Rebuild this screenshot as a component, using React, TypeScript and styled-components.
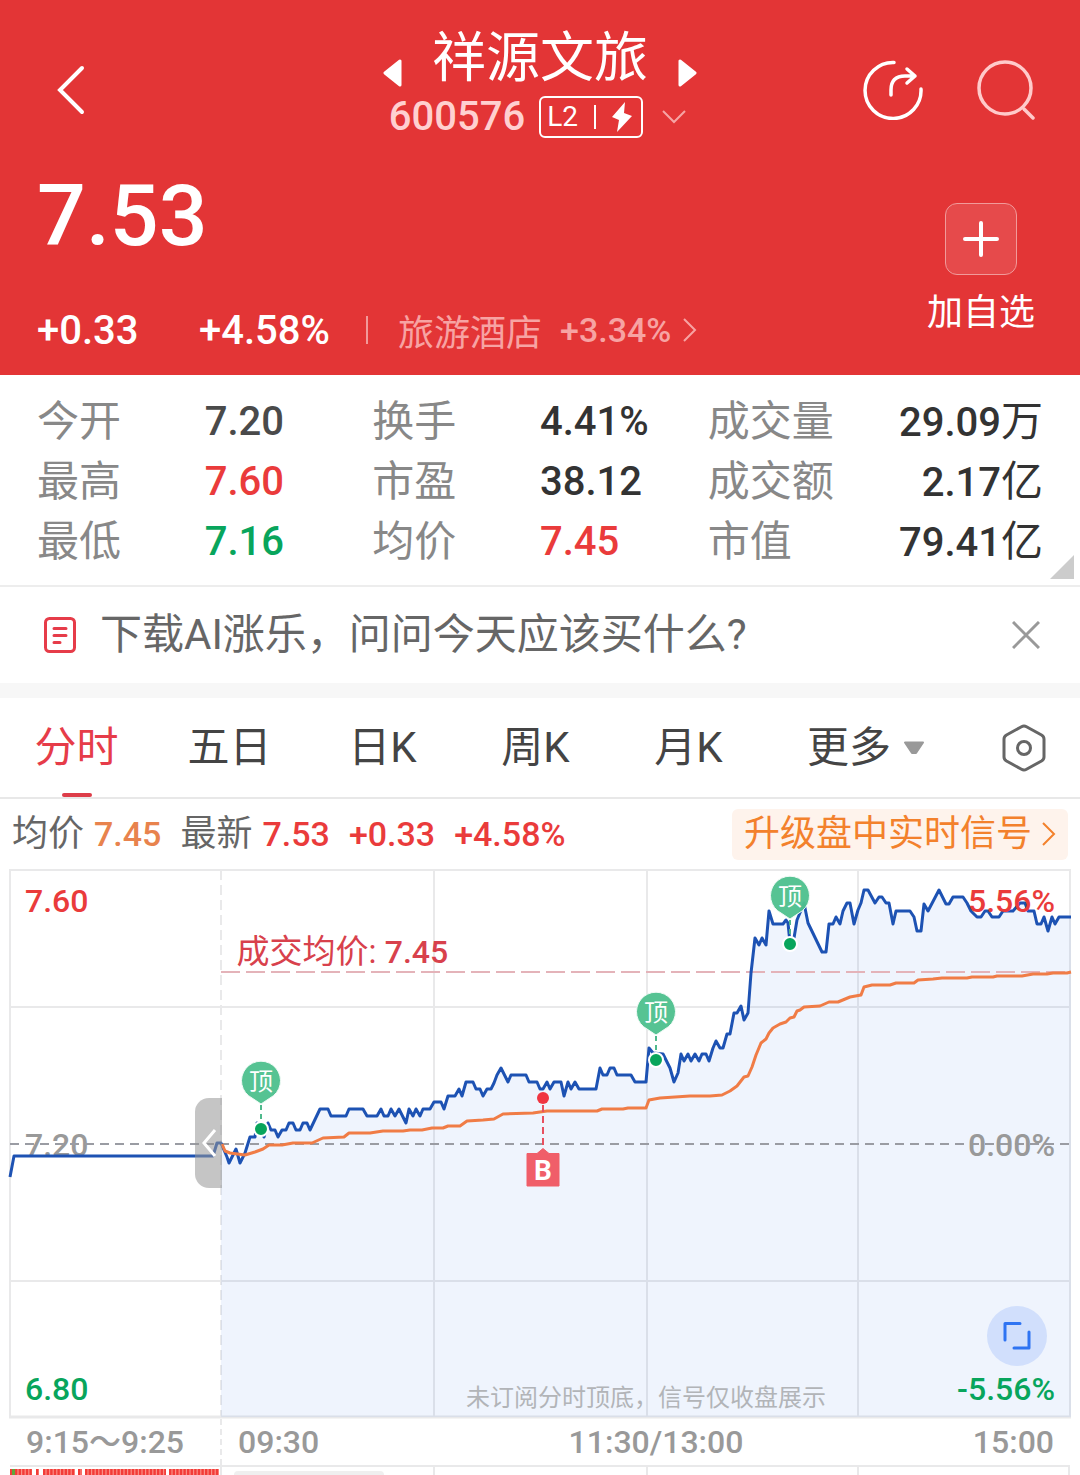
import React, { useState } from "react";
import styled, { createGlobalStyle } from "styled-components";

const RED = "#e33536";
const UP = "#ea3b3b";
const DOWN = "#08a55c";
const GRID = "#e9e9ea";

const GlobalStyle = createGlobalStyle`
  *, *::before, *::after { box-sizing: border-box; }
  body {
    margin: 0;
    background: #fff;
    color: #333;
    font-family: Roboto, "Noto Sans CJK SC", sans-serif;
  }
  button {
    margin: 0;
    padding: 0;
    border: 0;
    background: none;
    color: inherit;
    font: inherit;
    cursor: pointer;
  }
  svg { display: block; }
`;

const Page = styled.main`
  overflow: hidden;
`;

/* ---------- header ---------- */

const Header = styled.header`
  background: ${RED};
  color: #fff;
  padding: 24px 45px 15px 37px;
`;

const TopBar = styled.div`
  display: grid;
  grid-template-columns: 1fr auto 1fr;
  align-items: center;
  padding-left: 8px;
`;

const Side = styled.div<{ $end?: boolean }>`
  display: flex;
  gap: 52px;
  padding-top: 18px;
  padding-left: ${(p) => (p.$end ? "0" : "12px")};
  justify-content: ${(p) => (p.$end ? "flex-end" : "flex-start")};
`;

const TitleBlock = styled.div`
  display: flex;
  flex-direction: column;
  align-items: center;
  gap: 8px;
`;

const TitleRow = styled.div`
  display: flex;
  align-items: flex-end;
  gap: 30px;
  min-height: 64px;
`;

const Title = styled.h1`
  margin: 0;
  font-size: 54px;
  line-height: 58px;
  font-weight: 400;
`;

const CodeRow = styled.div`
  display: flex;
  align-items: center;
  gap: 14px;
  height: 42px;
`;

const Code = styled.span`
  font-size: 40px;
  line-height: 42px;
  font-weight: 500;
  color: #ffd0d0;
`;

const LevelBadge = styled.span`
  display: flex;
  align-items: center;
  justify-content: space-between;
  width: 104px;
  height: 42px;
  padding: 0 8px 0 6px;
  border: 2px solid #fff;
  border-radius: 6px;
  font-size: 28px;
  line-height: 38px;
`;

const Bar = styled.i<{ $height: number; $color: string }>`
  width: 2px;
  height: ${(p) => p.$height}px;
  background: ${(p) => p.$color};
`;

const Separator = styled(Bar)`
  margin-left: 36px;
`;

const Quote = styled.section`
  display: flex;
  justify-content: space-between;
  align-items: flex-start;
  padding-top: 34px;
`;

const Price = styled.div`
  font-size: 86px;
  line-height: 88px;
  font-weight: 500;
`;

const ChangeRow = styled.div`
  display: flex;
  align-items: center;
  height: 60px;
  margin-top: 40px;
  font-size: 40px;
  font-weight: 500;
`;

const Change = styled.span`
  width: 162px;
`;

const Sector = styled.a`
  display: flex;
  align-items: center;
  margin-left: 30px;
  color: #f7a3a3;
  font-size: 36px;
  font-weight: 400;
  text-decoration: none;
`;

const SectorChange = styled.span`
  margin: 0 12px 0 18px;
  font-size: 34px;
  font-weight: 500;
`;

const AddButton = styled.button`
  display: flex;
  flex-direction: column;
  align-items: center;
  gap: 12px;
  padding-top: 31px;
  font-size: 36px;
  line-height: 52px;
`;

const AddBox = styled.span`
  display: flex;
  align-items: center;
  justify-content: center;
  width: 72px;
  height: 72px;
  border: 1px solid #f19a9a;
  border-radius: 12px;
  background: #e64a4b;
`;

/* ---------- key figures ---------- */

const Stats = styled.dl`
  position: relative;
  display: grid;
  grid-template-columns: repeat(3, 1fr);
  grid-auto-rows: 60px;
  margin: 0;
  padding: 17px 37px 13px;
  border-bottom: 2px solid #ededed;
  font-size: 42px;
  line-height: 60px;
`;

const Stat = styled.div<{ $spread?: boolean }>`
  display: grid;
  grid-template-columns: ${(p) => (p.$spread ? "auto 1fr" : "1fr 1fr")};
  text-align: ${(p) => (p.$spread ? "right" : "left")};
`;

const StatName = styled.dt`
  color: #888;
`;

const StatValue = styled.dd<{ $color?: string }>`
  margin: 0;
  font-size: 40px;
  font-weight: 500;
  color: ${(p) => p.$color ?? "#333"};
`;

const Unit = styled.span`
  font-size: 42px;
  font-weight: 400;
`;

const Corner = styled.i`
  position: absolute;
  right: 6px;
  bottom: 6px;
  border: 12px solid;
  border-color: transparent #ccc #ccc transparent;
`;

/* ---------- promotion strip ---------- */

const Promo = styled.section`
  display: flex;
  align-items: center;
  height: 96px;
  padding: 0 40px 0 44px;
`;

const PromoText = styled.a`
  flex: 1;
  margin-left: 24px;
  color: #666;
  font-size: 42px;
  line-height: 60px;
  text-decoration: none;
`;

const Divider = styled.div`
  height: 15px;
  background: #f7f7f7;
`;

/* ---------- period tabs ---------- */

const Tabs = styled.nav`
  display: grid;
  grid-template-columns: repeat(5, 153fr) 202fr 113fr;
  height: 101px;
  border-bottom: 2px solid #e8e8e8;
`;

const Tab = styled.button<{ $active?: boolean }>`
  position: relative;
  display: flex;
  align-items: center;
  justify-content: center;
  gap: 12px;
  font-size: 42px;
  line-height: 60px;
  color: ${(p) => (p.$active ? "#e63c49" : "#444")};

  &::after {
    content: "";
    display: ${(p) => (p.$active ? "block" : "none")};
    position: absolute;
    bottom: 0;
    width: 30px;
    height: 4px;
    border-radius: 2px;
    background: #dd3d49;
  }
`;

/* ---------- chart ---------- */

const Legend = styled.div`
  display: flex;
  align-items: center;
  height: 70px;
  padding: 0 12px;
  font-size: 34px;
  line-height: 50px;
  font-weight: 500;
  color: ${UP};
`;

const LegendName = styled.span`
  margin-right: 10px;
  font-size: 36px;
  font-weight: 400;
  color: #666;
`;

const LegendValue = styled.span<{ $color?: string }>`
  margin-right: 19px;
  color: ${(p) => p.$color ?? "inherit"};
`;

const Upgrade = styled.button`
  display: flex;
  align-items: center;
  gap: 10px;
  height: 51px;
  margin-left: auto;
  padding: 0 12px;
  border-radius: 6px;
  background: #fef3ec;
  color: #f3812c;
  font-size: 36px;
  line-height: 50px;
  font-weight: 400;
`;

const Chart = styled.section`
  position: relative;
  margin: 0 10px;
`;

const Plot = styled.svg`
  position: relative;
  width: 100%;
  height: auto;
  overflow: visible;
`;

const Scale = styled.div<{ $right?: boolean }>`
  position: absolute;
  top: 12px;
  bottom: 10px;
  ${(p) => (p.$right ? "right: 15px;" : "left: 15px;")}
  display: flex;
  flex-direction: column;
  justify-content: space-between;
  text-align: ${(p) => (p.$right ? "right" : "left")};
  font-size: 32px;
  line-height: 40px;
  font-weight: 500;
`;

const Tone = styled.span<{ $color: string }>`
  color: ${(p) => p.$color};
`;

const AverageNote = styled.div`
  position: absolute;
  top: 12%;
  left: 21%;
  margin-left: 4px;
  font-size: 33px;
  line-height: 34px;
  color: #d8414c;
`;

const Strong = styled.span`
  font-size: 32px;
  font-weight: 500;
`;

const Note = styled.div`
  position: absolute;
  right: 244px;
  bottom: 4px;
  font-size: 24px;
  line-height: 34px;
  color: #b2b4b8;
`;

const Handle = styled.button`
  position: absolute;
  top: 50%;
  right: 80%;
  display: flex;
  align-items: center;
  justify-content: center;
  width: 27px;
  height: 90px;
  margin-top: -46px;
  border-radius: 14px 0 0 14px;
  background: rgba(150, 150, 150, 0.55);
`;

const Expand = styled.button`
  position: absolute;
  right: 23px;
  bottom: 53px;
  display: flex;
  align-items: center;
  justify-content: center;
  width: 60px;
  height: 60px;
  border-radius: 50%;
  background: #d1dffc;
`;

const TimeAxis = styled.div`
  display: grid;
  grid-template-columns: 212fr 212fr 444fr 192fr;
  margin: 0 10px;
  height: 46px;
  font-size: 32px;
  line-height: 46px;
  font-weight: 500;
  color: #999;
`;

const Tick = styled.span<{ $align?: string; $dashed?: boolean }>`
  padding: 0 16px;
  text-align: ${(p) => p.$align ?? "left"};
  border-right: ${(p) => (p.$dashed ? `2px dashed ${GRID}` : "0")};
`;

const Volume = styled.section`
  display: grid;
  grid-template-columns: 210fr 213fr 213fr 211fr 211fr;
  margin: 0 10px;
  border: solid ${GRID};
  border-width: 2px 2px 0 0;
`;

const VolumeCell = styled.div`
  height: 8px;
  padding: 4px 0 0 12px;
  border-left: 2px solid ${GRID};

  &:first-child {
    padding: 2px 0 0;
    border: 0;
  }
`;

const VolumeTag = styled.div`
  width: 150px;
  height: 4px;
  border-radius: 4px 4px 0 0;
  background: #efefef;
`;

const PRICE_LINE =
  "10,1177 14,1156 213,1156 217,1143 221,1143 227,1157 229,1163 236,1149 240,1163 245,1153 250,1137 255,1137 257,1123 261,1129 264,1137 268,1123 271,1130 275,1130 278,1137 282,1130 286,1130 289,1123 293,1123 296,1130 300,1130 303,1123 307,1123 310,1130 320,1109 328,1109 331,1116 346,1116 349,1109 363,1109 367,1116 377,1116 381,1109 384,1116 388,1116 391,1109 395,1116 399,1109 406,1123 409,1109 413,1116 416,1109 420,1116 423,1109 430,1109 434,1102 441,1102 444,1109 448,1096 455,1096 459,1089 462,1096 466,1082 473,1082 476,1089 480,1089 483,1096 487,1089 491,1089 494,1083 497,1075 501,1068 508,1082 511,1075 526,1075 529,1082 537,1082 540,1089 543,1089 547,1082 550,1089 554,1082 561,1082 564,1096 568,1082 571,1089 575,1082 579,1089 596,1089 600,1068 603,1075 607,1075 610,1068 614,1068 617,1075 631,1075 635,1082 646,1082 649,1048 653,1053 663,1054 670,1068 674,1082 678,1073 681,1054 684,1061 688,1054 691,1061 695,1054 699,1061 702,1054 706,1054 709,1061 713,1048 716,1041 720,1048 723,1048 727,1034 730,1034 734,1013 737,1013 741,1006 744,1020 748,1013 751,973 755,938 759,945 762,938 766,945 769,911 773,924 783,924 786,920 788,923 790,943 794,938 797,920 804,903 808,923 822,952 826,952 829,924 833,924 836,917 840,924 843,911 847,903 850,903 854,924 858,910 861,903 864,890 868,890 875,903 879,897 882,897 886,903 889,903 893,924 896,911 910,911 914,917 917,931 921,931 924,904 928,911 939,890 946,904 949,904 953,897 963,897 967,903 971,911 977,917 981,917 985,911 988,911 992,917 999,917 1003,911 1013,911 1020,903 1025,903 1028,911 1034,911 1037,924 1041,924 1044,917 1048,931 1052,917 1055,924 1059,917 1071,917";

const AVERAGE_LINE =
  "222,1144 225,1151 230,1153 245,1155 255,1152 263,1149 269,1145 282,1145 293,1143 312,1143 323,1138 344,1137 349,1133 370,1133 383,1131 403,1131 410,1130 422,1130 432,1128 443,1128 448,1126 460,1126 467,1121 483,1120 494,1119 503,1114 533,1113 547,1111 597,1111 602,1109 623,1109 628,1108 646,1108 649,1100 660,1098 690,1096 710,1096 722,1095 730,1091 737,1086 744,1077 748,1076 752,1067 756,1055 761,1043 766,1039 769,1033 773,1028 780,1024 786,1022 790,1018 794,1017 797,1011 800,1010 804,1007 820,1006 829,1002 838,1002 850,997 861,995 864,987 872,985 890,985 896,983 914,983 918,980 933,979 942,978 967,978 972,977 993,977 997,976 1022,976 1033,974 1047,974 1053,973 1067,973 1071,972";

const OPEN_AT = PRICE_LINE.indexOf("221,1143");
const AREA = `${PRICE_LINE.slice(OPEN_AT)} 1071,1417 221,1417`;

function TopMarker({ x, y, dot }: { x: number; y: number; dot: number }) {
  return (
    <g>
      <path d={`M${x} ${y + 24}V${dot}`} stroke="#4fb98c" strokeWidth="2" strokeDasharray="5 4" />
      <path
        d={`M${x} ${y + 23}L${x - 9} ${y + 17}A19.5 19.5 0 1 1 ${x + 9} ${y + 17}Z`}
        fill="#4fc18f"
        fillOpacity="0.96"
        stroke="#f2fbf7"
        strokeWidth="1"
      />
      <text x={x} y={y + 9} textAnchor="middle" fontSize="24" fill="#fff">
        顶
      </text>
      <circle cx={x} cy={dot} r="7" fill={DOWN} stroke="#fff" strokeWidth="2" />
    </g>
  );
}

function PriceChart() {
  return (
    <Chart aria-label="分时走势">
      <Scale>
        <Tone $color={UP}>7.60</Tone>
        <Tone $color="#999">7.20</Tone>
        <Tone $color={DOWN}>6.80</Tone>
      </Scale>
      <Plot viewBox="10 869 1060 550" fill="none">
        <g stroke={GRID} strokeWidth="2">
          <path d="M9 870H1071M10 1007H1070M10 1281H1070M10 870V1418M434 870V1417M647 870V1417M858 870V1417M1070 870V1418" />
          <path d="M9 1417H1071" strokeWidth="3" />
          <path d="M221 870V1417" strokeDasharray="10 5" />
        </g>
        <polygon points={AREA} fill="#1f66e5" fillOpacity="0.07" />
        <path d="M10 1144H1070" stroke="#9a9ca3" strokeWidth="2" strokeDasharray="9 6" />
        <path d="M221 972H1070" stroke="#e4b3b9" strokeWidth="2" strokeDasharray="19 6" />
        <polyline points={PRICE_LINE} stroke="#1d52b3" strokeWidth="3" strokeLinejoin="round" />
        <polyline points={AVERAGE_LINE} stroke="#f07c46" strokeWidth="3" strokeLinejoin="round" />
        <TopMarker x={261} y={1081} dot={1129} />
        <TopMarker x={656} y={1012} dot={1060} />
        <TopMarker x={790} y={896} dot={944} />
        <path d="M543 1105V1148" stroke="#e8505f" strokeWidth="2" strokeDasharray="7 4" />
        <circle cx="543" cy="1098" r="6" fill="#f03541" />
        <path
          d="M527 1153.500H537L543 1148.500L549 1153.500H559V1186H527Z"
          fill="#f05e69"
          stroke="#f05e69"
          strokeWidth="1"
          strokeLinejoin="round"
        />
        <text x="543" y="1180" textAnchor="middle" fontSize="28" fontWeight="700" fill="#fff">
          B
        </text>
      </Plot>
      <Scale $right>
        <Tone $color={UP}>5.56%</Tone>
        <Tone $color="#999">0.00%</Tone>
        <Tone $color={DOWN}>-5.56%</Tone>
      </Scale>
      <AverageNote>
        成交均价: <Strong>7.45</Strong>
      </AverageNote>
      <Note>未订阅分时顶底，信号仅收盘展示</Note>
      <Handle aria-label="收起集合竞价">
        <svg width="16" height="30" viewBox="0 0 16 30" fill="none">
          <path d="M14 2L3 15L14 28" stroke="#fff" strokeWidth="3" />
        </svg>
      </Handle>
      <Expand aria-label="全屏">
        <svg width="28" height="28" viewBox="0 0 28 28" fill="none" stroke="#2f74f2" strokeWidth="3">
          <path d="M2 18V1.500H17M26 10V26H11" strokeLinecap="round" strokeLinejoin="round" />
        </svg>
      </Expand>
    </Chart>
  );
}

const AUCTION_GROUPS = [
  [5, 22],
  [26, 29],
  [33, 65],
  [68, 72],
  [75, 156],
  [159, 209],
];

function AuctionVolume() {
  return (
    <svg width="100%" height="6" viewBox="0 0 210 6" preserveAspectRatio="none">
      <path d="M0 0H2V6H0Z" fill="#f23c38" />
      <path d="M2 0H5V6H2Z" fill="#5fa63c" />
      {AUCTION_GROUPS.map(([from, to]) => (
        <g key={from}>
          <path d={`M${from} 0H${to}V6H${from}Z`} fill="#fb8f88" />
          <path d={`M${from} 3H${to}`} stroke="#f23c38" strokeWidth="6" strokeDasharray="2.400 1.200" />
        </g>
      ))}
    </svg>
  );
}

const STATS = [
  { name: "今开", value: "7.20", color: "#4a4a4a" },
  { name: "换手", value: "4.41%" },
  { name: "成交量", value: "29.09", unit: "万" },
  { name: "最高", value: "7.60", color: UP },
  { name: "市盈", value: "38.12" },
  { name: "成交额", value: "2.17", unit: "亿" },
  { name: "最低", value: "7.16", color: DOWN },
  { name: "均价", value: "7.45", color: UP },
  { name: "市值", value: "79.41", unit: "亿" },
];

const PERIODS = ["分时", "五日", "日K", "周K", "月K"];

export default function App() {
  const [period, setPeriod] = useState("分时");

  return (
    <Page>
      <GlobalStyle />
      <Header>
        <TopBar>
          <Side>
            <button aria-label="返回">
              <svg width="28" height="50" viewBox="0 0 28 50" fill="none">
                <path d="M25 3L3 25L25 47" stroke="#fff" strokeWidth="4" strokeLinecap="round" />
              </svg>
            </button>
          </Side>
          <TitleBlock>
            <TitleRow>
              <button aria-label="上一只">
                <svg width="19" height="29" viewBox="0 0 19 29">
                  <path d="M2 14L17 2V26Z" fill="#fff" stroke="#fff" strokeWidth="3" strokeLinejoin="round" />
                </svg>
              </button>
              <Title>祥源文旅</Title>
              <button aria-label="下一只">
                <svg width="19" height="29" viewBox="0 0 19 29">
                  <path d="M17 14L2 2V26Z" fill="#fff" stroke="#fff" strokeWidth="3" strokeLinejoin="round" />
                </svg>
              </button>
            </TitleRow>
            <CodeRow>
              <Code>600576</Code>
              <LevelBadge>
                L2
                <Bar $height={24} $color="#fff" />
                <svg width="22" height="30" viewBox="0 0 22 30">
                  <path d="M14 0L1 15L8 18L6 30L21 14L13 11Z" fill="#fff" />
                </svg>
              </LevelBadge>
              <svg width="34" height="14" viewBox="0 0 34 14" fill="none">
                <path d="M6 1L17 12L28 1" stroke="#f6a5a5" strokeWidth="2" />
              </svg>
            </CodeRow>
          </TitleBlock>
          <Side $end>
            <button aria-label="分享">
              <svg width="60" height="60" viewBox="0 0 60 60" fill="none" stroke="#fff" strokeWidth="3.500" strokeLinecap="round" strokeLinejoin="round">
                <path d="M31 2.500A28 28 0 1 0 58 29" />
                <path d="M28 35V30Q28 16 42 16H52M44 9L52 16L44 23" />
              </svg>
            </button>
            <button aria-label="搜索">
              <svg width="60" height="60" viewBox="0 0 60 60" fill="none" stroke="#ffcaca" strokeWidth="3.500" strokeLinecap="round">
                <circle cx="30" cy="28" r="26" />
                <path d="M49 49L58 58" />
              </svg>
            </button>
          </Side>
        </TopBar>
        <Quote>
          <div>
            <Price>7.53</Price>
            <ChangeRow>
              <Change>+0.33</Change>
              <span>+4.58%</span>
              <Separator $height={28} $color="#f29a9a" />
              <Sector href="#sector">
                旅游酒店
                <SectorChange>+3.34%</SectorChange>
                <svg width="14" height="26" viewBox="0 0 14 26" fill="none">
                  <path d="M1 2L12 13L1 24" stroke="#f7a3a3" strokeWidth="2" />
                </svg>
              </Sector>
            </ChangeRow>
          </div>
          <AddButton>
            <AddBox>
              <svg width="38" height="38" viewBox="0 0 38 38">
                <path d="M19 3V35M3 19H35" stroke="#fff" strokeWidth="4" strokeLinecap="round" />
              </svg>
            </AddBox>
            加自选
          </AddButton>
        </Quote>
      </Header>

      <Stats>
        {STATS.map((s) => (
          <Stat key={s.name} $spread={Boolean(s.unit)}>
            <StatName>{s.name}</StatName>
            <StatValue $color={s.color}>
              {s.value}
              {s.unit && <Unit>{s.unit}</Unit>}
            </StatValue>
          </Stat>
        ))}
        <Corner />
      </Stats>

      <Promo>
        <svg width="32" height="36" viewBox="0 0 32 36" fill="none" stroke="#e63c49" strokeWidth="3" strokeLinecap="round">
          <rect x="1.500" y="1.500" width="29" height="33" rx="4" />
          <path d="M10 11.500H22M10 18.500H22M10 25.500H16" />
        </svg>
        <PromoText href="#ai">下载AI涨乐，问问今天应该买什么?</PromoText>
        <button aria-label="关闭">
          <svg width="28" height="28" viewBox="0 0 28 28">
            <path d="M1 1L27 27M27 1L1 27" stroke="#999" strokeWidth="3" />
          </svg>
        </button>
      </Promo>
      <Divider />

      <Tabs>
        {PERIODS.map((p) => (
          <Tab key={p} $active={p === period} onClick={() => setPeriod(p)}>
            {p}
          </Tab>
        ))}
        <Tab>
          更多
          <svg width="22" height="14" viewBox="0 0 22 14">
            <path d="M2 1.500H20L13 12H9Z" fill="#999" stroke="#999" strokeWidth="2" strokeLinejoin="round" />
          </svg>
        </Tab>
        <Tab aria-label="设置">
          <svg width="44" height="48" viewBox="0 0 44 48" fill="none" stroke="#666" strokeWidth="3">
            <path d="M19.500 2.700Q22 1.300 24.500 2.700L39.500 11Q42 12.500 42 15V33Q42 35.500 39.500 37L24.500 45.300Q22 46.700 19.500 45.300L4.500 37Q2 35.500 2 33V15Q2 12.500 4.500 11Z" />
            <circle cx="22" cy="24" r="6.500" />
          </svg>
        </Tab>
      </Tabs>

      <Legend>
        <LegendName>均价</LegendName>
        <LegendValue $color="#e8834d">7.45</LegendValue>
        <LegendName>最新</LegendName>
        <LegendValue>7.53</LegendValue>
        <LegendValue>+0.33</LegendValue>
        <LegendValue>+4.58%</LegendValue>
        <Upgrade>
          升级盘中实时信号
          <svg width="14" height="24" viewBox="0 0 14 24" fill="none">
            <path d="M1 1L12 12L1 23" stroke="#f3812c" strokeWidth="2" />
          </svg>
        </Upgrade>
      </Legend>

      <PriceChart />

      <TimeAxis>
        <Tick $dashed>9:15～9:25</Tick>
        <Tick>09:30</Tick>
        <Tick $align="center">11:30/13:00</Tick>
        <Tick $align="right">15:00</Tick>
      </TimeAxis>

      <Volume aria-label="成交量">
        <VolumeCell>
          <AuctionVolume />
        </VolumeCell>
        <VolumeCell>
          <VolumeTag />
        </VolumeCell>
        <VolumeCell />
        <VolumeCell />
        <VolumeCell />
      </Volume>
    </Page>
  );
}
